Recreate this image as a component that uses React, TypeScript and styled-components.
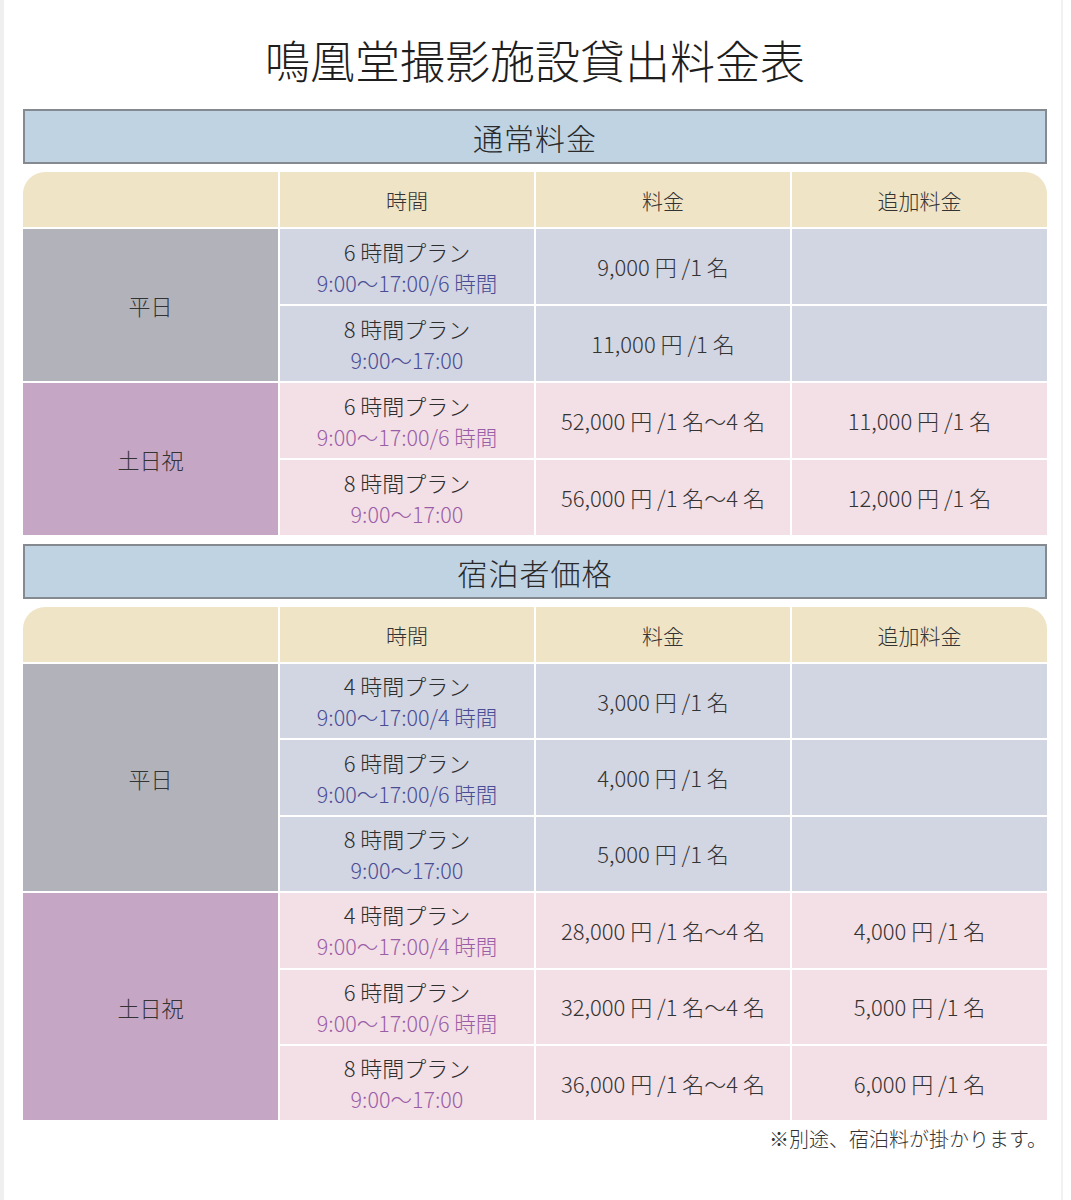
import React from "react";
import styled, { createGlobalStyle } from "styled-components";

const Global = createGlobalStyle`
  html, body { margin: 0; padding: 0; background: #ffffff; }
  body { font-family: "Noto Sans CJK JP", "Noto Sans", sans-serif; color: #333333; font-weight: 300; }
`;

const Page = styled.div`
  box-sizing: border-box;
  width: 1063px;
  min-height: 1200px;
  border-left: 4px solid #efefef;
  border-right: 2px solid #f1f1f1;
  padding: 37px 0 0 19px;
`;

const Title = styled.h1`
  margin: 0 0 27px;
  width: 1024px;
  text-align: center;
  font-size: 45px;
  line-height: 45px;
  height: 45px;
  font-weight: 300;
  color: #1e1e1e;
  font-family: "Noto Sans CJK JP", serif;
`;

const SectionBar = styled.div<{ $top?: number }>`
  box-sizing: border-box;
  width: 1024px;
  height: 55px;
  margin-top: ${(p) => p.$top ?? 0}px;
  background: #c0d3e3;
  border: 2px solid #848a90;
  display: flex;
  align-items: center;
  justify-content: center;
  font-size: 30px;
  color: #2a2a2a;
  letter-spacing: 1px;
`;

const Table = styled.div<{ $rows: number; $rowH: number }>`
  width: 1024px;
  margin-top: 8px;
  display: grid;
  grid-template-columns: 255px 254px 254px 255px;
  grid-template-rows: 55px repeat(${(p) => p.$rows}, ${(p) => p.$rowH}px);
  gap: 2px;
`;

const HeadCell = styled.div<{ $corner?: "left" | "right" }>`
  background: #efe4c6;
  display: flex;
  align-items: center;
  justify-content: center;
  font-size: 21px;
  color: #333333;
  border-top-left-radius: ${(p) => (p.$corner === "left" ? "22px" : "0")};
  border-top-right-radius: ${(p) => (p.$corner === "right" ? "22px" : "0")};
`;

const LabelCell = styled.div<{ $weekend?: boolean; $span: number }>`
  grid-column: 1;
  grid-row: span ${(p) => p.$span};
  background: ${(p) => (p.$weekend ? "#c6a6c5" : "#b2b2ba")};
  display: flex;
  align-items: center;
  justify-content: center;
  font-size: 22px;
  color: #333333;
`;

const Cell = styled.div<{ $weekend?: boolean }>`
  background: ${(p) => (p.$weekend ? "#f3dfe6" : "#d2d5e2")};
  display: flex;
  flex-direction: column;
  align-items: center;
  justify-content: center;
  font-size: 22px;
  color: #333333;
  line-height: 31px;
`;

const PlanName = styled.div`
  font-size: 22px;
  color: #2e2e2e;
`;

const PlanTime = styled.div<{ $weekend?: boolean }>`
  font-size: 21.5px;
  color: ${(p) => (p.$weekend ? "#9a5ea6" : "#4a4d96")};
`;

const Note = styled.div`
  width: 1024px;
  text-align: right;
  margin-top: 4px;
  font-size: 20px;
  color: #333333;
`;

type Row = { plan: string; time: string; price: string; extra: string };
type Group = { label: string; weekend: boolean; rows: Row[] };

const normal: Group[] = [
  {
    label: "平日",
    weekend: false,
    rows: [
      { plan: "6 時間プラン", time: "9:00〜17:00/6 時間", price: "9,000 円 /1 名", extra: "" },
      { plan: "8 時間プラン", time: "9:00〜17:00", price: "11,000 円 /1 名", extra: "" },
    ],
  },
  {
    label: "土日祝",
    weekend: true,
    rows: [
      { plan: "6 時間プラン", time: "9:00〜17:00/6 時間", price: "52,000 円 /1 名〜4 名", extra: "11,000 円 /1 名" },
      { plan: "8 時間プラン", time: "9:00〜17:00", price: "56,000 円 /1 名〜4 名", extra: "12,000 円 /1 名" },
    ],
  },
];

const guest: Group[] = [
  {
    label: "平日",
    weekend: false,
    rows: [
      { plan: "4 時間プラン", time: "9:00〜17:00/4 時間", price: "3,000 円 /1 名", extra: "" },
      { plan: "6 時間プラン", time: "9:00〜17:00/6 時間", price: "4,000 円 /1 名", extra: "" },
      { plan: "8 時間プラン", time: "9:00〜17:00", price: "5,000 円 /1 名", extra: "" },
    ],
  },
  {
    label: "土日祝",
    weekend: true,
    rows: [
      { plan: "4 時間プラン", time: "9:00〜17:00/4 時間", price: "28,000 円 /1 名〜4 名", extra: "4,000 円 /1 名" },
      { plan: "6 時間プラン", time: "9:00〜17:00/6 時間", price: "32,000 円 /1 名〜4 名", extra: "5,000 円 /1 名" },
      { plan: "8 時間プラン", time: "9:00〜17:00", price: "36,000 円 /1 名〜4 名", extra: "6,000 円 /1 名" },
    ],
  },
];

function PriceTable({ groups, rowH }: { groups: Group[]; rowH: number }) {
  const total = groups.reduce((n, g) => n + g.rows.length, 0);
  return (
    <Table $rows={total} $rowH={rowH}>
      <HeadCell $corner="left" />
      <HeadCell>時間</HeadCell>
      <HeadCell>料金</HeadCell>
      <HeadCell $corner="right">追加料金</HeadCell>
      {groups.map((g) => (
        <React.Fragment key={g.label}>
          <LabelCell $weekend={g.weekend} $span={g.rows.length}>
            {g.label}
          </LabelCell>
          {g.rows.map((r, i) => (
            <React.Fragment key={i}>
              <Cell $weekend={g.weekend}>
                <PlanName>{r.plan}</PlanName>
                <PlanTime $weekend={g.weekend}>{r.time}</PlanTime>
              </Cell>
              <Cell $weekend={g.weekend}>{r.price}</Cell>
              <Cell $weekend={g.weekend}>{r.extra}</Cell>
            </React.Fragment>
          ))}
        </React.Fragment>
      ))}
    </Table>
  );
}

export default function App() {
  return (
    <>
      <Global />
      <Page>
        <Title>鳴凰堂撮影施設貸出料金表</Title>
        <SectionBar>通常料金</SectionBar>
        <PriceTable groups={normal} rowH={75} />
        <SectionBar $top={9}>宿泊者価格</SectionBar>
        <PriceTable groups={guest} rowH={74.4} />
        <Note>※別途、宿泊料が掛かります。</Note>
      </Page>
    </>
  );
}
